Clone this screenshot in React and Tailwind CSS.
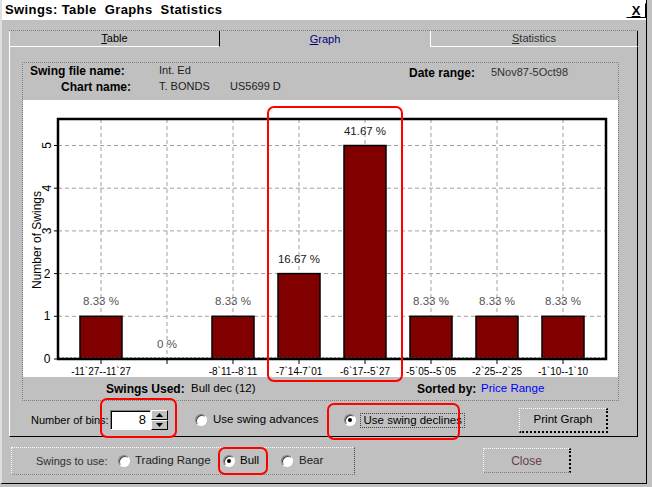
import React from 'react';

const bins = [
  { label: '-11`27--11`27', n: 1, pct: '8.33 %' },
  { label: '', n: 0, pct: '0 %' },
  { label: '-8`11--8`11', n: 1, pct: '8.33 %' },
  { label: '-7`14-7`01', n: 2, pct: '16.67 %' },
  { label: '-6`17--5`27', n: 5, pct: '41.67 %' },
  { label: '-5`05--5`05', n: 1, pct: '8.33 %' },
  { label: '-2`25--2`25', n: 1, pct: '8.33 %' },
  { label: '-1`10--1`10', n: 1, pct: '8.33 %' },
];

const ff = 'Liberation Sans, Arial, sans-serif';

const Chart = () => {
  const y = (v) => 259 - v * 42.7;
  const cx = (i) => 78 + 66 * i;
  return (
    <svg width="595" height="277" className="block">
      {[1, 2, 3, 4, 5].map((v) => (
        <line key={v} x1="35" x2="583" y1={y(v)} y2={y(v)} stroke="#a0a0a0" strokeDasharray="4 3" />
      ))}
      {bins.map((b, i) => (
        <line key={i} x1={cx(i)} x2={cx(i)} y1="19" y2="259" stroke="#a0a0a0" strokeDasharray="4 3" />
      ))}
      {bins.map((b, i) =>
        b.n > 0 ? (
          <rect key={i} x={cx(i) - 21} y={y(b.n)} width="42" height={259 - y(b.n)} fill="#800000" stroke="#000" strokeWidth="1.5" />
        ) : null
      )}
      <line x1="35" x2="583" y1="258" y2="258" stroke="#008080" strokeDasharray="2 2" />
      <rect x="35" y="19" width="548" height="240" fill="none" stroke="#000" strokeWidth="2.5" />
      {[0, 1, 2, 3, 4, 5].map((v) => (
        <line key={v} x1="31" x2="35" y1={y(v)} y2={y(v)} stroke="#000" />
      ))}
      {bins.map((b, i) => (
        <line key={i} x1={cx(i)} x2={cx(i)} y1="259" y2="264" stroke="#000" />
      ))}
      {bins.map((b, i) => (
        <text key={i} x={cx(i)} y={y(b.n) - 11} textAnchor="middle" fontSize="11.5" fontFamily={ff} fill={b.n > 1 ? '#202020' : '#555555'}>
          {b.pct}
        </text>
      ))}
      {bins.map((b, i) => (
        <text key={i} x={cx(i)} y="275" textAnchor="middle" fontSize="10" fontFamily={ff} fill="#000">
          {b.label}
        </text>
      ))}
      {[0, 1, 2, 3, 4, 5].map((v) =>
        v >= 3 ? (
          <text key={v} x="24" y={y(v)} textAnchor="middle" dominantBaseline="central" fontSize="12" fontFamily={ff} transform={`rotate(-90 24 ${y(v)})`}>
            {v}
          </text>
        ) : (
          <text key={v} x="24" y={y(v)} textAnchor="middle" dominantBaseline="central" fontSize="12" fontFamily={ff}>
            {v}
          </text>
        )
      )}
      <text x="14" y="140" textAnchor="middle" dominantBaseline="central" fontSize="12" fontFamily={ff} transform="rotate(-90 14 140)">
        Number of Swings
      </text>
    </svg>
  );
};

const Radio = ({ checked }) => (
  <span className="inline-flex w-[12px] h-[12px] shrink-0 rounded-full bg-white border border-t-[#808080] border-l-[#808080] border-r-white border-b-white shadow-[inset_1px_1px_#404040] items-center justify-center">
    {checked && <span className="w-[4px] h-[4px] rounded-full bg-black" />}
  </span>
);

const RedBox = ({ className }) => (
  <div className={`absolute border-2 border-[#ff0000] rounded-[7px] pointer-events-none ${className}`} />
);

export default function App() {
  return (
    <div className="relative w-[652px] h-[487px] bg-[#c0c0c0] overflow-hidden text-[11px] text-black font-['Liberation_Sans',Arial,sans-serif]">
      <div className="flex flex-col w-[647px] h-[484px] border-l-2 border-l-[#dfdfdf] border-r border-r-black border-b border-b-black">
        {/* title bar */}
        <div className="h-[21px] bg-white flex items-center justify-between pl-[3px] border-b border-b-[#c0c0c0]">
          <span className="font-bold text-[13px] tracking-[0.4px]">Swings: Table&nbsp; Graphs&nbsp; Statistics</span>
          <span className="w-[20px] h-[15px] flex items-center justify-center border border-t-white border-l-white border-r-black border-b-black bg-white font-bold text-[13px] leading-none underline">
            X
          </span>
        </div>

        <div className="flex flex-col pl-[7px]">
          {/* tabs */}
          <div className="mt-[9px] flex w-[629px] h-[17px] border-t border-dotted border-t-[#808080]">
            <div className="w-[211px] flex items-center justify-center border-l border-l-white border-r border-r-black border-b border-b-white">
              <span><u>T</u>able</span>
            </div>
            <div className="w-[211px] flex items-center justify-center border-r border-r-white text-[#000080]">
              <span><u>G</u>raph</span>
            </div>
            <div className="flex-1 flex items-center justify-center border-r border-r-black border-b border-b-white text-[#303030]">
              <span><u>S</u>tatistics</span>
            </div>
          </div>

          {/* tab panel */}
          <div className="w-[629px] h-[390px] flex flex-col pl-[12px] pt-[15px] border-l border-l-white border-r border-r-black border-b border-b-black">
            <div className="w-[597px] h-[339px] flex flex-col border border-dotted border-[#808080] border-t-solid">
              <div className="h-[37px] flex flex-col">
                <div className="h-[15px] flex items-center">
                  <span className="w-[136px] pl-[7px] font-bold text-[12px]">Swing file name:</span>
                  <span className="w-[250px] text-[#202020]">Int. Ed</span>
                  <span className="w-[82px] font-bold text-[12px] mt-[4px]">Date range:</span>
                  <span className="text-[#303030] mt-[4px]">5Nov87-5Oct98</span>
                </div>
                <div className="h-[17px] flex items-center">
                  <span className="w-[136px] pl-[38px] font-bold text-[12px]">Chart name:</span>
                  <span className="w-[71px] text-[#202020]">T. BONDS</span>
                  <span className="text-[#202020]">US5699 D</span>
                </div>
              </div>
              <div className="h-[277px] bg-white">
                <Chart />
              </div>
              <div className="flex-1 flex items-center pl-[83px]">
                <span className="w-[311px] flex items-center">
                  <span className="w-[85px] font-bold text-[12px]">Swings Used:</span>
                  <span className="text-[11.5px]">Bull dec (12)</span>
                </span>
                <span className="w-[64px] font-bold text-[12px]">Sorted by:</span>
                <span className="text-[11.5px] text-[#0000ff]">Price Range</span>
              </div>
            </div>

            {/* controls */}
            <div className="flex-1 flex items-center pt-[3px] pr-[29px]">
              <span className="ml-[9px] w-[79px]">Number of bins:</span>
              <div className="w-[41px] h-[20px] bg-white flex items-center justify-end pr-[4px] border border-t-[#808080] border-l-[#808080] border-r-white border-b-white shadow-[inset_1px_1px_#000] text-[13px]">
                8
              </div>
              <div className="w-[17px] h-[20px] flex flex-col">
                <div className="h-[10px] flex items-center justify-center bg-[#c0c0c0] border border-t-white border-l-white border-r-black border-b-black">
                  <svg width="7" height="4"><path d="M3.5 0 L7 4 L0 4 Z" fill="#000" /></svg>
                </div>
                <div className="h-[10px] flex items-center justify-center bg-[#c0c0c0] border border-t-white border-l-white border-r-black border-b-black">
                  <svg width="7" height="4"><path d="M0 0 L7 0 L3.5 4 Z" fill="#000" /></svg>
                </div>
              </div>
              <span className="ml-[27px] flex items-center gap-[6px]">
                <Radio />
                <span className="text-[11.5px]">Use swing advances</span>
              </span>
              <span className="ml-[26px] flex items-center gap-[4px]">
                <Radio checked />
                <span className="text-[11.5px] px-[2px] border border-dotted border-[#404040] leading-[13px]">Use swing declines</span>
              </span>
              <div className="ml-auto w-[89px] h-[25px] flex items-center justify-center text-[11.5px] border border-dotted border-t-white border-l-white border-r-2 border-b-2 border-r-black border-b-black border-r-solid border-b-solid">
                Print Graph
              </div>
            </div>
          </div>

          {/* bottom row */}
          <div className="mt-[10px] flex items-start">
            <div className="ml-[2px] w-[344px] h-[28px] flex items-center pl-[24px] border border-dotted border-t-white border-l-white border-r-[#404040] border-b-[#808080] border-r-solid">
              <span className="w-[82px] text-[#303030]">Swings to use:</span>
              <Radio />
              <span className="ml-[5px] w-[88px] text-[11.5px] text-[#202020]">Trading Range</span>
              <Radio checked />
              <span className="ml-[5px] w-[41px] text-[11.5px]">Bull</span>
              <Radio />
              <span className="ml-[6px] text-[11.5px] text-[#202020]">Bear</span>
            </div>
            <div className="ml-[128px] mt-[1px] w-[88px] h-[25px] flex items-center justify-center text-[12px] text-[#6a3c4c] border border-dotted border-t-white border-l-white border-r-2 border-r-black border-r-solid border-b-[#808080]">
              Close
            </div>
          </div>
        </div>
      </div>

      <RedBox className="left-[267px] top-[106px] w-[136px] h-[276px]" />
      <RedBox className="left-[100px] top-[398px] w-[77px] h-[40px]" />
      <RedBox className="left-[327px] top-[403px] w-[133px] h-[37px]" />
      <RedBox className="left-[218px] top-[447px] w-[50px] h-[28px]" />
    </div>
  );
}
